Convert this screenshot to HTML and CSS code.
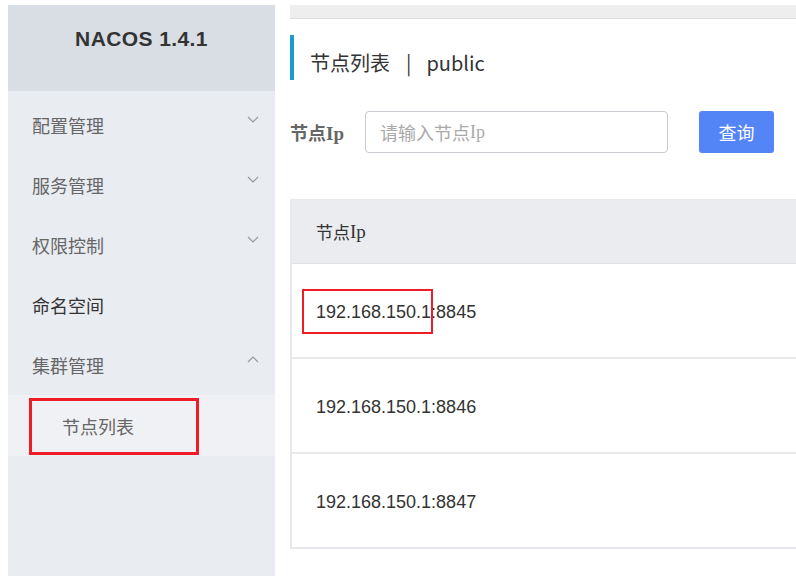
FILE: index.html
```html
<!DOCTYPE html>
<html>
<head>
<meta charset="utf-8">
<link rel="stylesheet" href="styles.css">
</head>
<body>
<div class="page">
  <aside class="sidebar">
    <div class="brand">NACOS 1.4.1</div>
    <ul class="menu">
      <li class="menu-item"><span>配置管理</span><svg class="chev" viewBox="0 0 12 7"><polyline points="1,1 6,6 11,1"/></svg></li>
      <li class="menu-item"><span>服务管理</span><svg class="chev" viewBox="0 0 12 7"><polyline points="1,1 6,6 11,1"/></svg></li>
      <li class="menu-item"><span>权限控制</span><svg class="chev" viewBox="0 0 12 7"><polyline points="1,1 6,6 11,1"/></svg></li>
      <li class="menu-item dark"><span>命名空间</span></li>
      <li class="menu-item"><span>集群管理</span><svg class="chev" viewBox="0 0 12 7"><polyline points="1,6 6,1 11,6"/></svg></li>
      <li class="submenu"><span>节点列表</span><div class="mark side-mark"></div></li>
    </ul>
  </aside>
  <main class="main">
    <div class="topbar"></div>
    <h1 class="title">节点列表<span class="sep">|</span>public</h1>
    <div class="search">
      <label class="label">节点<span class="serif">Ip</span></label>
      <div class="input">请输入节点<span class="serif">Ip</span></div>
      <button class="btn">查询</button>
    </div>
    <div class="table">
      <div class="thead">节点<span class="serif">Ip</span></div>
      <div class="row"><span class="cell">192.168.150.1:8845<span class="mark ip-mark"></span></span></div>
      <div class="row"><span class="cell">192.168.150.1:8846</span></div>
      <div class="row"><span class="cell">192.168.150.1:8847</span></div>
    </div>
  </main>
</div>
</body>
</html>
```

FILE: styles.css
```css
* { box-sizing: border-box; }
html, body { margin: 0; padding: 0; background: #fff; }
body {
  font-family: "Liberation Sans", "Noto Sans CJK SC", sans-serif;
  color: #333;
  width: 796px;
  height: 585px;
  overflow: hidden;
}
.serif { font-family: "Liberation Serif", serif; }
.page {
  display: flex;
  padding: 5px 0 0 8px;
}
.sidebar {
  width: 267px;
  height: 571px;
  background: #e9ecf1;
  flex: none;
}
.brand {
  height: 86px;
  background: #d9dee4;
  text-align: center;
  font-weight: bold;
  font-size: 21px;
  line-height: 22px;
  padding-top: 23px;
  color: #333;
  letter-spacing: 0.4px;
}
.menu {
  list-style: none;
  margin: 0;
  padding: 4px 0 0 0;
}
.menu-item {
  height: 60px;
  display: flex;
  align-items: center;
  justify-content: space-between;
  padding: 0 16px 0 24px;
  font-family: "Noto Sans CJK SC", sans-serif;
  font-size: 18px;
  color: #666;
}
.menu-item.dark { color: #333; }
.chev {
  width: 12px;
  height: 7px;
  fill: none;
  stroke: #999;
  stroke-width: 1.2;
  margin-top: -12px;
}
.submenu {
  position: relative;
  height: 61px;
  background: #f0f1f5;
  display: flex;
  align-items: center;
  padding-left: 54px;
  font-family: "Noto Sans CJK SC", sans-serif;
  font-size: 18px;
  color: #666;
}
.mark {
  position: absolute;
  border: 3px solid #ee1c25;
}
.side-mark {
  left: 21px;
  top: 3px;
  width: 170px;
  height: 57px;
}
.main {
  flex: 1;
  margin-left: 15px;
  min-width: 0;
  overflow: hidden;
}
.topbar {
  height: 14px;
  background: #eeeeee;
  border-bottom: 1px solid #dcdcdc;
}
.title {
  margin: 16px 0 0 0;
  height: 45px;
  border-left: 4px solid #1a9bd0;
  padding: 10px 0 0 16px;
  display: flex;
  align-items: center;
  font-weight: normal;
  font-size: 20px;
  font-family: "Noto Sans CJK SC", sans-serif;
  color: #333;
}
.sep { margin: 0 15px 0 16px; }
.search {
  display: flex;
  align-items: center;
  margin-top: 31px;
  height: 42px;
}
.label {
  width: 75px;
  font-weight: bold;
  font-size: 18px;
  color: #666;
  font-family: "Noto Sans CJK SC", sans-serif;
}
.label .serif { font-size: 19px; }
.input {
  width: 303px;
  height: 42px;
  border: 1px solid #c9cbd0;
  border-radius: 4px;
  padding-left: 14px;
  display: flex;
  align-items: center;
  color: #aaa;
  font-size: 18px;
  font-family: "Noto Sans CJK SC", sans-serif;
}
.btn {
  margin-left: 31px;
  width: 75px;
  height: 42px;
  border: none;
  border-radius: 3px;
  background: #5485f7;
  color: #fff;
  font-size: 18px;
  font-family: "Noto Sans CJK SC", sans-serif;
  padding: 0;
}
.table {
  margin-top: 46px;
  width: 540px;
  border-left: 2px solid #e8e9ed;
  border-top: 1px solid #e8e9ed;
}
.thead {
  height: 64px;
  background: #ebecf0;
  border-bottom: 1px solid #e0e2e7;
  display: flex;
  align-items: center;
  padding-left: 24px;
  font-size: 17px;
  color: #333;
  font-family: "Noto Sans CJK SC", sans-serif;
}
.thead .serif { font-size: 19px; }
.row {
  height: 95px;
  border-bottom: 2px solid #e8e9ed;
  display: flex;
  align-items: center;
  padding-left: 24px;
  font-size: 18px;
  color: #333;
}
.cell { position: relative; padding-top: 3px; }
.ip-mark {
  left: -14px;
  top: -10px;
  width: 131px;
  height: 45px;
  border-width: 2.5px;
}
```
